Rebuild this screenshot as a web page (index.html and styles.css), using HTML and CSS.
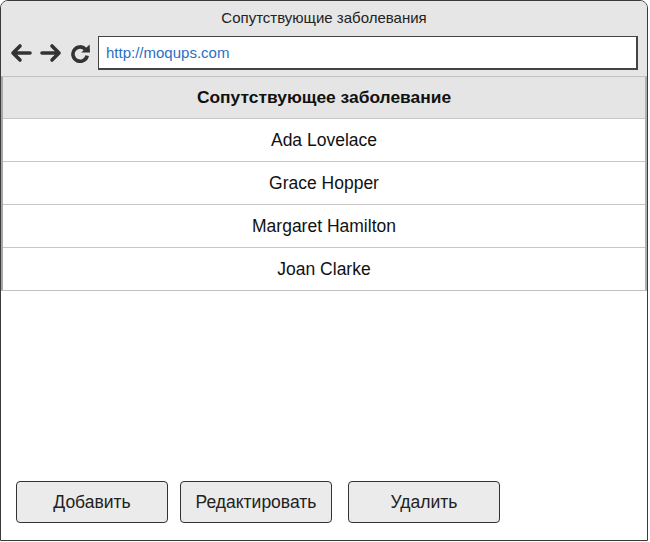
FILE: index.html
```html
<!DOCTYPE html>
<html lang="ru">
<head>
<meta charset="utf-8">
<title>Сопутствующие заболевания</title>
<link rel="stylesheet" href="styles.css">
</head>
<body>
<div class="window">
  <div class="chrome">
    <div class="title">Сопутствующие заболевания</div>
    <div class="nav">
      <svg class="icon" width="22" height="20" viewBox="0 0 22 20"><path d="M20 10H3.5M10 3L3 10l7 7" fill="none" stroke="#333" stroke-width="3.6" stroke-linecap="round" stroke-linejoin="round"/></svg>
      <svg class="icon" width="22" height="20" viewBox="0 0 22 20"><path d="M2 10h16.5M12 3l7 7-7 7" fill="none" stroke="#333" stroke-width="3.6" stroke-linecap="round" stroke-linejoin="round"/></svg>
      <svg class="icon reload" width="20" height="20" viewBox="0 0 20 20"><path d="M15.4 6.2A7.2 7.2 0 1 0 17.2 12.6" fill="none" stroke="#333" stroke-width="3.6"/><path d="M11.2 9.4L20 9.4 19.6 1.6z" fill="#333"/></svg>
      <div class="url">http://moqups.com</div>
    </div>
  </div>
  <div class="table">
    <div class="row head">Сопутствующее заболевание</div>
    <div class="row">Ada Lovelace</div>
    <div class="row">Grace Hopper</div>
    <div class="row">Margaret Hamilton</div>
    <div class="row">Joan Clarke</div>
  </div>
  <div class="spacer"></div>
  <div class="actions">
    <button class="btn">Добавить</button>
    <button class="btn">Редактировать</button>
    <button class="btn wide-gap">Удалить</button>
  </div>
</div>
</body>
</html>
```

FILE: styles.css
```css
* { box-sizing: border-box; }
html, body { margin: 0; padding: 0; background: #fff; }
body { font-family: "Liberation Sans", Arial, sans-serif; color: #111; }

.window {
  width: 648px;
  height: 541px;
  border: 1px solid #3a3a3a;
  border-radius: 8px 8px 0 0;
  display: flex;
  flex-direction: column;
  overflow: hidden;
  background: #fff;
}

.chrome {
  background: #e6e6e6;
  height: 75px;
  display: flex;
  flex-direction: column;
}

.title {
  height: 34px;
  padding-top: 8px;
  text-align: center;
  font-size: 15px;
  color: #222;
}

.nav {
  display: flex;
  align-items: center;
  padding-left: 9px;
  height: 35px;
}

.icon { flex: none; }
.icon + .icon { margin-left: 8px; }
.reload { margin-left: 7px; }

.url {
  margin-left: 8px;
  width: 540px;
  height: 34px;
  border: 1px solid #444;
  border-bottom-width: 2px;
  border-right-width: 2px;
  background: #fff;
  color: #2a6fc4;
  font-size: 15px;
  padding: 7px 0 0 7px;
}

.table {
  border: 1px solid #c2c2c2;
  border-left: 2px solid #a8a8a8;
  border-right: 2px solid #b0b0b0;
}

.row {
  height: 43px;
  border-bottom: 1px solid #c6c6c6;
  display: flex;
  align-items: center;
  justify-content: center;
  font-size: 17.5px;
  color: #111;
  background: #fff;
}
.row:last-child { border-bottom: 0; height: 42px; }
.row.head {
  height: 42px;
  background: #e5e5e5;
  font-weight: bold;
  font-size: 17.4px;
  border-bottom: 1px solid #c6c6c6;
}

.spacer { flex: 1; }

.actions {
  display: flex;
  gap: 12px;
  padding: 0 0 17px 15px;
}

.btn {
  width: 152px;
  height: 42px;
  border: 1px solid #333;
  border-radius: 4px;
  background: #ebebeb;
  font-family: "Liberation Sans", Arial, sans-serif;
  font-size: 17.5px;
  color: #222;
  padding: 0;
}
.btn.wide-gap { margin-left: 4px; }
```
